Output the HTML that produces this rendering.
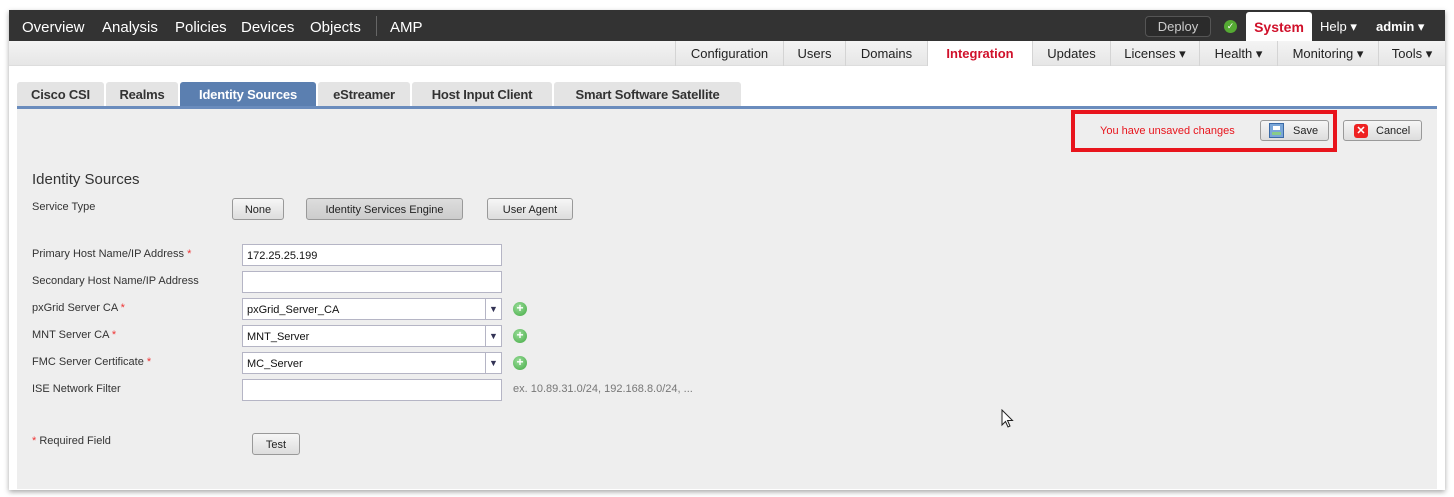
<!DOCTYPE html>
<html><head><style>
*{box-sizing:border-box;margin:0;padding:0}
body{width:1454px;height:497px;background:#fff;font-family:"Liberation Sans",sans-serif;position:relative;overflow:hidden}
.a{position:absolute;white-space:nowrap}
#frame{left:9px;top:10px;width:1436px;height:480px;background:#fff;box-shadow:0 2px 5px rgba(0,0,0,.35)}
#top{left:9px;top:10px;width:1436px;height:31px;background:#333}
.tn{color:#fff;font-size:15px;top:19px}
#sub{left:9px;top:41px;width:1436px;height:25px;background:linear-gradient(#f4f4f4,#e6e6e6);border-bottom:1px solid #ddd}
.sn{top:41px;height:25px;font-size:13px;color:#222;line-height:25px;text-align:center;border-left:1px solid #d4d4d4}
.tab{top:82px;height:25px;background:#e4e4e4;font-size:13px;font-weight:bold;color:#333;line-height:25px;text-align:center;border-radius:3px 3px 0 0;letter-spacing:-0.2px}
#content{left:17px;top:109px;width:1420px;height:380px;background:#eee}
.lbl{font-size:11px;color:#333}
.btn{height:22px;border:1px solid #999;border-radius:3px;background:linear-gradient(#f6f6f6,#ddd);font-size:11px;color:#222;text-align:center;line-height:22px}
.inp{left:242px;width:260px;height:22px;background:#fff;border:1px solid #b5b5c5;font-size:11px;line-height:22px;padding-left:4px;color:#111}
.dd{position:absolute;right:0;top:0;width:16px;height:20px;border-left:1px solid #b5b5c5;color:#335;font-size:9px;text-align:center;line-height:20px}
.plus{left:513px;width:14px;height:14px;border-radius:50%;background:radial-gradient(circle at 40% 35%,#9d9,#4a4);color:#fff;font-size:12px;font-weight:bold;line-height:13px;text-align:center}
.req{color:#e33}
</style></head><body>
<div class="a" id="frame"></div>
<div class="a" id="top"></div>
<div class="a tn" style="left:22px">Overview</div>
<div class="a tn" style="left:102px">Analysis</div>
<div class="a tn" style="left:175px">Policies</div>
<div class="a tn" style="left:241px">Devices</div>
<div class="a tn" style="left:310px">Objects</div>
<div class="a" style="left:376px;top:16px;width:1px;height:20px;background:#666"></div>
<div class="a tn" style="left:390px">AMP</div>
<div class="a" style="left:1145px;top:16px;width:66px;height:21px;border:1px solid #555;border-radius:4px;background:#2b2b2b;color:#ccc;font-size:13px;text-align:center;line-height:19px">Deploy</div>
<div class="a" style="left:1224px;top:20px;width:13px;height:13px;border-radius:50%;background:#5a3;color:#fff;font-size:9px;text-align:center;line-height:13px">✓</div>
<div class="a" style="left:1246px;top:12px;width:66px;height:30px;background:#fff;border-radius:3px 3px 0 0;color:#d0112b;font-size:14px;font-weight:bold;text-align:center;line-height:30px">System</div>
<div class="a" style="left:1320px;top:19px;color:#fff;font-size:13px">Help ▾</div>
<div class="a" style="left:1376px;top:19px;color:#fff;font-size:13px;font-weight:bold">admin <span style="font-weight:normal">▾</span></div>
<div class="a" id="sub"></div>
<div class="a sn" style="left:675px;width:108px">Configuration</div>
<div class="a sn" style="left:783px;width:62px">Users</div>
<div class="a sn" style="left:845px;width:82px">Domains</div>
<div class="a sn" style="left:927px;width:105px;background:#fff;color:#d0112b;font-weight:bold">Integration</div>
<div class="a sn" style="left:1032px;width:78px">Updates</div>
<div class="a sn" style="left:1110px;width:89px">Licenses ▾</div>
<div class="a sn" style="left:1199px;width:78px">Health ▾</div>
<div class="a sn" style="left:1277px;width:101px">Monitoring ▾</div>
<div class="a sn" style="left:1378px;width:67px">Tools ▾</div>
<div class="a tab" style="left:17px;width:87px">Cisco CSI</div>
<div class="a tab" style="left:106px;width:72px">Realms</div>
<div class="a tab" style="left:180px;width:136px;background:#5b7fb0;color:#fff">Identity Sources</div>
<div class="a tab" style="left:318px;width:92px">eStreamer</div>
<div class="a tab" style="left:412px;width:140px">Host Input Client</div>
<div class="a tab" style="left:554px;width:187px">Smart Software Satellite</div>
<div class="a" style="left:17px;top:106px;width:1420px;height:3px;background:#6a8cbd"></div>
<div class="a" id="content"></div>
<div class="a" style="left:1071px;top:110px;width:266px;height:42px;border:4px solid #e8141c"></div>
<div class="a" style="left:1100px;top:125px;color:#e8141c;font-size:11px">You have unsaved changes</div>
<div class="a btn" style="left:1260px;top:120px;width:69px;height:21px;line-height:21px;text-align:left;padding-left:32px">Save</div>
<div class="a" style="left:1269px;top:123px;width:15px;height:15px;background:#7aa6d8;border:1px solid #3a6aa6"><div style="margin:2px 3px;width:7px;height:4px;background:#fff"></div><div style="margin:2px 2px;width:9px;height:3px;background:#8c8"></div></div>
<div class="a btn" style="left:1343px;top:120px;width:79px;height:21px;line-height:21px;text-align:left;padding-left:32px">Cancel</div>
<div class="a" style="left:1354px;top:124px;width:14px;height:14px;border-radius:3px;background:#e22;color:#fff;font-size:11px;font-weight:bold;text-align:center;line-height:14px">✕</div>
<div class="a" style="left:32px;top:171px;font-size:15px;color:#333">Identity Sources</div>
<div class="a lbl" style="left:32px;top:201px">Service Type</div>
<div class="a btn" style="left:232px;top:198px;width:52px">None</div>
<div class="a btn" style="left:306px;top:198px;width:157px;background:linear-gradient(#ddd,#ccc)">Identity Services Engine</div>
<div class="a btn" style="left:487px;top:198px;width:86px">User Agent</div>
<div class="a lbl" style="left:32px;top:248px">Primary Host Name/IP Address <span class="req">*</span></div>
<div class="a inp" style="top:244px">172.25.25.199</div>
<div class="a lbl" style="left:32px;top:275px">Secondary Host Name/IP Address</div>
<div class="a inp" style="top:271px"></div>
<div class="a lbl" style="left:32px;top:302px">pxGrid Server CA <span class="req">*</span></div>
<div class="a inp" style="top:298px">pxGrid_Server_CA<div class="dd">▼</div></div>
<div class="a plus" style="top:302px">+</div>
<div class="a lbl" style="left:32px;top:329px">MNT Server CA <span class="req">*</span></div>
<div class="a inp" style="top:325px">MNT_Server<div class="dd">▼</div></div>
<div class="a plus" style="top:329px">+</div>
<div class="a lbl" style="left:32px;top:356px">FMC Server Certificate <span class="req">*</span></div>
<div class="a inp" style="top:352px">MC_Server<div class="dd">▼</div></div>
<div class="a plus" style="top:356px">+</div>
<div class="a lbl" style="left:32px;top:383px">ISE Network Filter</div>
<div class="a inp" style="top:379px"></div>
<div class="a lbl" style="left:513px;top:383px;color:#777">ex. 10.89.31.0/24, 192.168.8.0/24, ...</div>
<div class="a lbl" style="left:32px;top:435px"><span class="req">*</span> Required Field</div>
<div class="a btn" style="left:252px;top:433px;width:48px">Test</div>
<svg class="a" style="left:1001px;top:409px" width="14" height="20" viewBox="0 0 14 20"><path d="M1 1 L1 16 L4.5 12.5 L7 18 L9 17 L6.5 11.5 L11.5 11.5 Z" fill="#fff" stroke="#222" stroke-width="1"/></svg>
</body></html>
